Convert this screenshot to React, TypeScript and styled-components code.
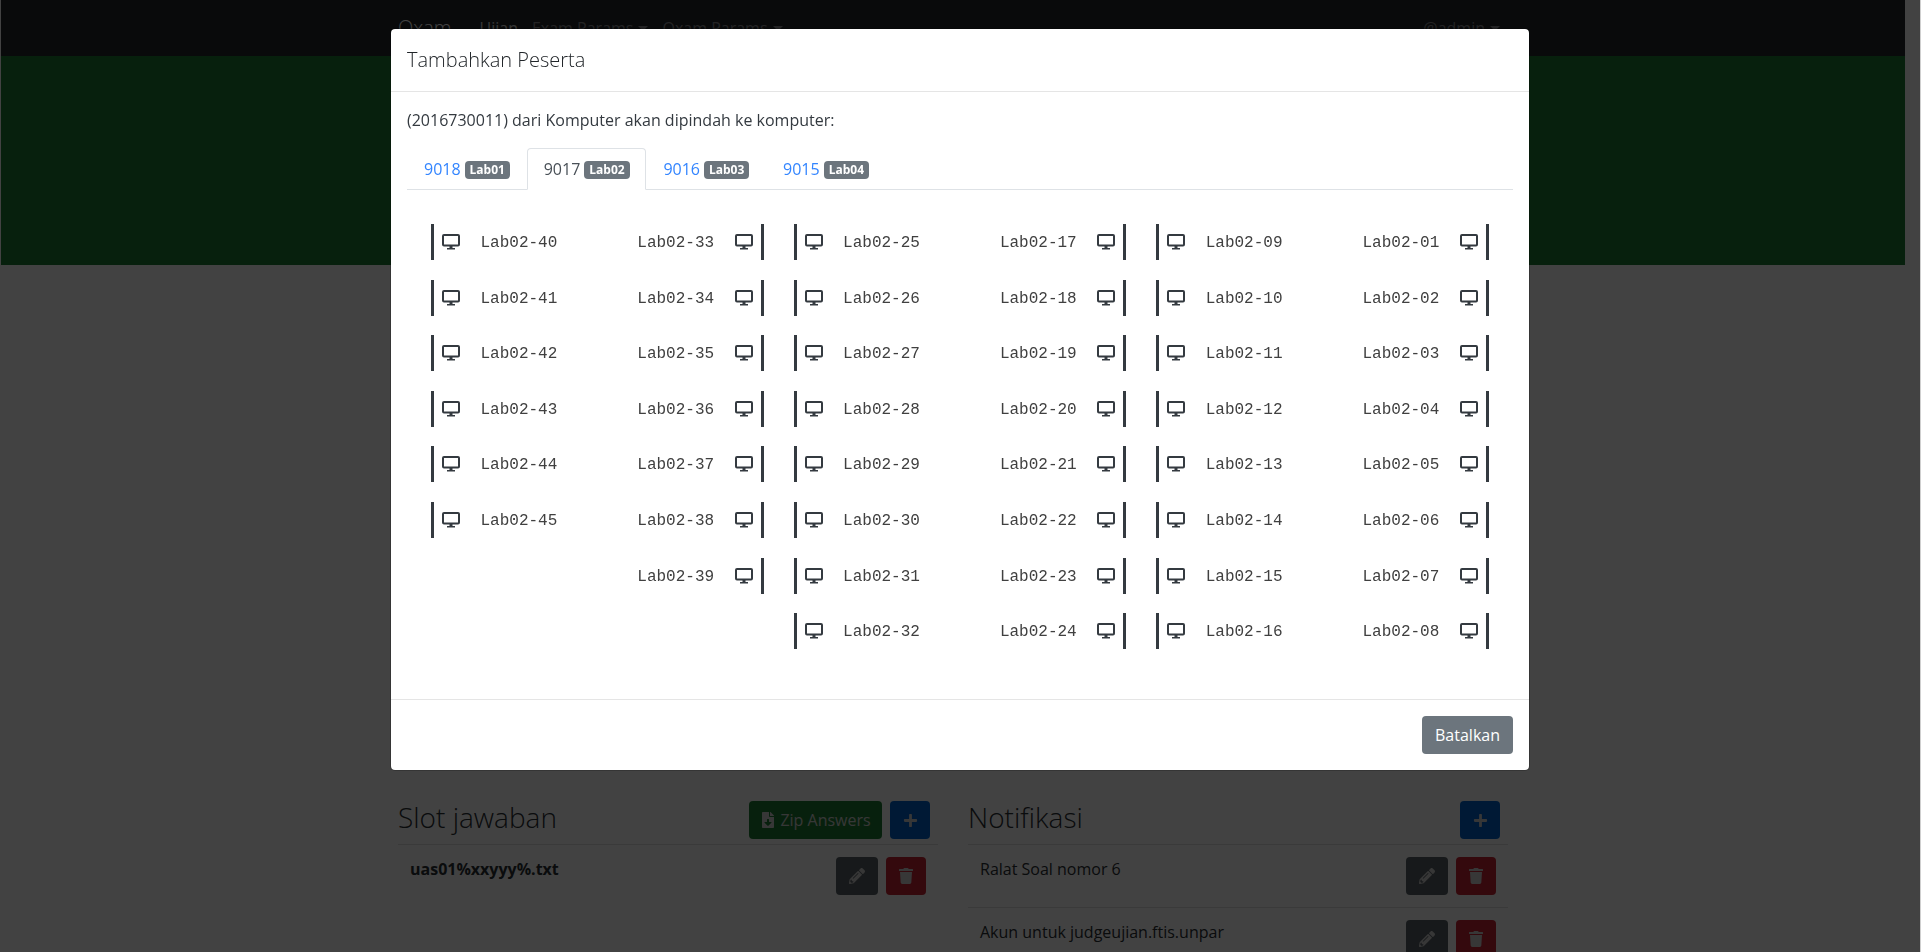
import styled, { createGlobalStyle } from "styled-components";
import { FaFileDownload, FaPencilAlt, FaPlus, FaTrash } from "react-icons/fa";

const GlobalStyle = createGlobalStyle`
  html, body {
    margin: 0;
    padding: 0;
    height: 100%;
    overflow: hidden;
    background: #cfcfcf;
  }
  body {
    font-family: "Open Sans", "Liberation Sans", sans-serif;
    font-size: 16px;
    line-height: 24px;
    color: #212529;
  }
  * {
    box-sizing: border-box;
  }
`

const Page = styled.div`
  width: 1920px;
  height: 952px;
  padding: 0 15px 0 1px;
  background: #fff;
  overflow: hidden;
`

const Navbar = styled.nav`
  height: 56px;
  background: #23272b;
  display: flex;
  align-items: center;
  padding: 0 405px 0 397px;
`

const Brand = styled.span`
  font-size: 20px;
  font-weight: 300;
  color: #fff;
  margin-right: 28px;
`

const NavLink = styled.span<{ $active?: boolean }>`
  font-size: 16px;
  margin-right: 14px;
  color: ${p => p.$active ? "rgba(255, 255, 255, .8)" : "rgba(255, 255, 255, .45)"};
`

const Caret = styled.span`
  display: inline-block;
  margin-left: 5px;
  vertical-align: 3px;
  border-top: 5px solid;
  border-left: 5px solid transparent;
  border-right: 5px solid transparent;
`

const NavUser = styled(NavLink)`
  margin-left: auto;
  margin-right: 0;
`

const Banner = styled.div`
  height: 209px;
  background: #1e7e34;
`

const Main = styled.main`
  display: grid;
  grid-template-columns: 540px 540px;
  column-gap: 30px;
  padding: 536px 0 0 397px;
  color: #2a2e32;

  button {
    color: #d4d4d4;
  }
`

const SectionHead = styled.div`
  display: flex;
  align-items: flex-start;
  gap: 8px;
  height: 44px;
  padding-right: 8px;
  border-bottom: 1px solid rgba(0, 0, 0, .125);
`

const SectionTitle = styled.h3`
  margin: -2px auto 0 0;
  font-size: 28px;
  line-height: 36px;
  font-weight: 300;
`

const Button = styled.button<{ $color: string; $width?: number }>`
  display: inline-flex;
  align-items: center;
  justify-content: center;
  gap: 4px;
  height: 38px;
  width: ${p => p.$width ? `${p.$width}px` : "auto"};
  padding: 0;
  border: 0;
  border-radius: 4px;
  background: ${p => p.$color};
  color: #fff;
  font-family: inherit;
  font-size: 16px;
  flex-shrink: 0;
`

const ListRow = styled.div`
  display: flex;
  align-items: flex-start;
  gap: 8px;
  height: 62px;
  padding: 12px;
  & + & {
    border-top: 1px solid rgba(0, 0, 0, .125);
  }
`

const RowText = styled.span<{ $bold?: boolean }>`
  margin-right: auto;
  font-weight: ${p => p.$bold ? 700 : 400};
`

const Backdrop = styled.div`
  position: fixed;
  top: 0;
  left: 0;
  width: 1920px;
  height: 952px;
  background: rgba(0, 0, 0, .74);
`

const Modal = styled.div`
  position: fixed;
  top: 28px;
  left: 390px;
  width: 1140px;
  background: #fff;
  background-clip: padding-box;
  border: 1px solid rgba(0, 0, 0, .2);
  border-radius: 5px;
`

const ModalHeader = styled.div`
  height: 63px;
  padding: 16px;
  border-bottom: 1px solid #e5e5e5;
`

const ModalTitle = styled.h5`
  margin: 0;
  font-size: 20px;
  line-height: 30px;
  font-weight: 300;
`

const ModalBody = styled.div`
  padding: 16px 16px 16px;
`

const ModalFooter = styled.div`
  display: flex;
  justify-content: flex-end;
  padding: 16px;
  border-top: 1px solid #e5e5e5;
`

const Intro = styled.p`
  margin: 0 0 16px;
  color: #343a40;
`

const Tabs = styled.div`
  display: flex;
  height: 42px;
  border-bottom: 1px solid #dee2e6;
`

const Tab = styled.div<{ $active?: boolean }>`
  width: 119.7px;
  height: 42px;
  padding: 8px 0 0 16px;
  white-space: nowrap;
  border: 1px solid ${p => p.$active ? "#dee2e6" : "transparent"};
  border-bottom-color: ${p => p.$active ? "#fff" : "transparent"};
  border-radius: 4px 4px 0 0;
  background: ${p => p.$active ? "#fff" : "transparent"};
  color: ${p => p.$active ? "#495057" : "#3385ff"};
`

const Badge = styled.span`
  display: inline-block;
  margin-left: 4px;
  padding: 3px 5px;
  height: 18px;
  border-radius: 4px;
  background: #6c757d;
  color: #fff;
  font-size: 12px;
  line-height: 12px;
  font-weight: 700;
  vertical-align: 1px;
`

const RoomGrid = styled.div`
  display: grid;
  grid-template-columns: repeat(3, 332.6px);
  column-gap: 30px;
  padding: 34px 0 14px 24px;
`

const Group = styled.div`
  display: grid;
  grid-template-columns: 1fr 1fr;
`

const Column = styled.div`
  display: flex;
  flex-direction: column;
`

const Computer = styled.div<{ $side: "left" | "right" }>`
  display: flex;
  flex-direction: ${p => p.$side === "left" ? "row" : "row-reverse"};
  align-items: center;
  gap: 20.5px;
  height: 36px;
  margin-bottom: 19.6px;
  padding: 0 8px;
  border-${p => p.$side}: 3px solid #343a40;
`

const ComputerName = styled.span`
  padding-top: 2px;
  font-family: "Liberation Mono", monospace;
  font-size: 16px;
  color: #404040;
`

const MonitorIcon = () => (
    <svg width="18" height="16" viewBox="0 0 18 16" fill="none" style={{flexShrink: 0}}>
        <rect x="1" y="1" width="16" height="10.5" rx="1" stroke="#343a40" strokeWidth="2"/>
        <path d="M7.5 12h3v2h-3z M5 14h8v1.5H5z" fill="#343a40"/>
    </svg>
)

const rooms = [
    {id: "9018", lab: "Lab01"},
    {id: "9017", lab: "Lab02", active: true},
    {id: "9016", lab: "Lab03"},
    {id: "9015", lab: "Lab04"},
]

const range = (from: number, to: number) => {
    const numbers: number[] = []
    for (let n = from; n <= to; n++) {
        numbers.push(n)
    }
    return numbers
}

const groups = [
    {left: range(40, 45), right: range(33, 39)},
    {left: range(25, 32), right: range(17, 24)},
    {left: range(9, 16), right: range(1, 8)},
]

const computerName = (n: number) => `Lab02-${String(n).padStart(2, "0")}`

const ComputerList = ({numbers, side}: { numbers: number[], side: "left" | "right" }) => (
    <Column>
        {numbers.map(n => (
            <Computer key={n} $side={side}>
                <MonitorIcon/>
                <ComputerName>{computerName(n)}</ComputerName>
            </Computer>
        ))}
    </Column>
)

const RowActions = () => (
    <>
        <Button $color="#5a6268" $width={42}><FaPencilAlt size={16}/></Button>
        <Button $color="#c82333" $width={40}><FaTrash size={16}/></Button>
    </>
)

const App = () => {
    return (
        <>
            <GlobalStyle/>
            <Page>
                <Navbar>
                    <Brand>Oxam</Brand>
                    <NavLink $active>Ujian</NavLink>
                    <NavLink>Exam Params<Caret/></NavLink>
                    <NavLink>Oxam Params<Caret/></NavLink>
                    <NavUser>@admin<Caret/></NavUser>
                </Navbar>
                <Banner/>
                <Main>
                    <section>
                        <SectionHead>
                            <SectionTitle>Slot jawaban</SectionTitle>
                            <Button $color="#1e7e34" $width={133}><FaFileDownload size={16}/>Zip Answers</Button>
                            <Button $color="#0062cc" $width={40}><FaPlus size={15}/></Button>
                        </SectionHead>
                        <ListRow>
                            <RowText $bold>uas01%xxyyy%.txt</RowText>
                            <RowActions/>
                        </ListRow>
                    </section>
                    <section>
                        <SectionHead>
                            <SectionTitle>Notifikasi</SectionTitle>
                            <Button $color="#0062cc" $width={40}><FaPlus size={15}/></Button>
                        </SectionHead>
                        <ListRow>
                            <RowText>Ralat Soal nomor 6</RowText>
                            <RowActions/>
                        </ListRow>
                        <ListRow>
                            <RowText>Akun untuk judgeujian.ftis.unpar</RowText>
                            <RowActions/>
                        </ListRow>
                    </section>
                </Main>
            </Page>
            <Backdrop/>
            <Modal>
                <ModalHeader>
                    <ModalTitle>Tambahkan Peserta</ModalTitle>
                </ModalHeader>
                <ModalBody>
                    <Intro>(2016730011) dari Komputer akan dipindah ke komputer:</Intro>
                    <Tabs>
                        {rooms.map(room => (
                            <Tab key={room.id} $active={room.active}>
                                {room.id}<Badge>{room.lab}</Badge>
                            </Tab>
                        ))}
                    </Tabs>
                    <RoomGrid>
                        {groups.map((group, index) => (
                            <Group key={index}>
                                <ComputerList numbers={group.left} side="left"/>
                                <ComputerList numbers={group.right} side="right"/>
                            </Group>
                        ))}
                    </RoomGrid>
                </ModalBody>
                <ModalFooter>
                    <Button $color="#6c757d" $width={91}>Batalkan</Button>
                </ModalFooter>
            </Modal>
        </>
    )
}

export default App;
